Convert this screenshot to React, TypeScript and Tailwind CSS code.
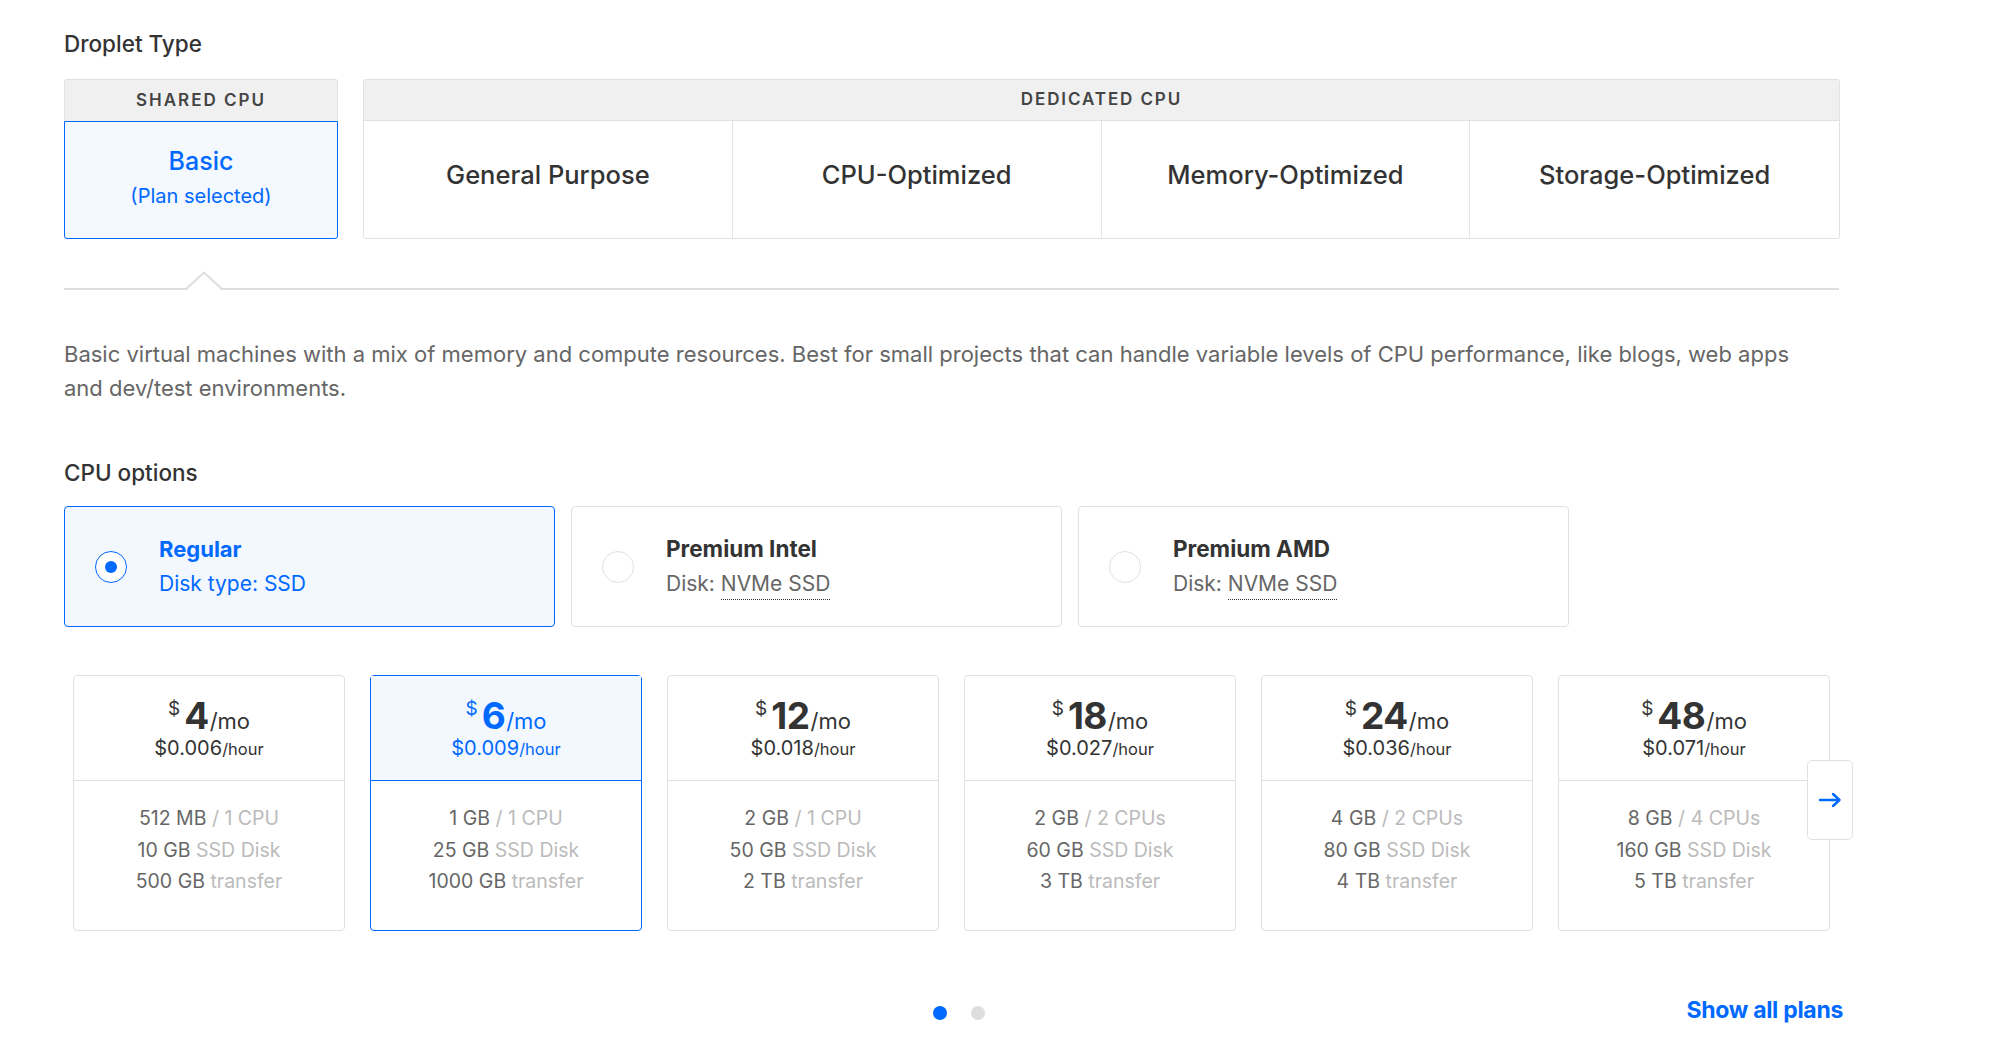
import React from "react";

const plans = [
  { mo: "4", hr: "$0.006", mem: "512 MB", cpu: "1 CPU", disk: "10 GB", tr: "500 GB" },
  { mo: "6", hr: "$0.009", mem: "1 GB", cpu: "1 CPU", disk: "25 GB", tr: "1000 GB", sel: true },
  { mo: "12", hr: "$0.018", mem: "2 GB", cpu: "1 CPU", disk: "50 GB", tr: "2 TB" },
  { mo: "18", hr: "$0.027", mem: "2 GB", cpu: "2 CPUs", disk: "60 GB", tr: "3 TB" },
  { mo: "24", hr: "$0.036", mem: "4 GB", cpu: "2 CPUs", disk: "80 GB", tr: "4 TB" },
  { mo: "48", hr: "$0.071", mem: "8 GB", cpu: "4 CPUs", disk: "160 GB", tr: "5 TB" },
];

const dedicated = ["General Purpose", "CPU-Optimized", "Memory-Optimized", "Storage-Optimized"];

export default function App() {
  return (
    <div
      className="w-[2000px] min-h-[1046px] bg-white text-[#333]"
      style={{ fontFamily: "Inter, 'Liberation Sans', sans-serif" }}
    >
      <div className="ml-[64px] w-[1776px] pt-[30px]">
        <h2 className="text-[22.5px] font-medium leading-[28px] text-[#333]">Droplet Type</h2>

        <div className="mt-[21px] flex gap-[25px]">
          <div className="w-[274px] flex flex-col">
            <div className="h-[42px] flex items-center justify-center bg-[#f0f0f0] border border-b-0 border-[#e1e1e1] rounded-t-[3px] text-[17px] font-semibold tracking-[2px] text-[#444]">
              SHARED CPU
            </div>
            <div className="h-[118px] flex flex-col items-center justify-center pb-[6px] bg-[#f4f8ff] border border-[#0069ff] rounded-b-[3px]">
              <div className="text-[25px] font-medium text-[#0069ff] leading-[30px]">Basic</div>
              <div className="text-[20px] text-[#0069ff] leading-[24px] mt-[8px]">(Plan selected)</div>
            </div>
          </div>
          <div className="flex-1 flex flex-col border border-[#e1e1e1] rounded-[3px]">
            <div className="h-[41px] flex items-center justify-center bg-[#f0f0f0] border-b border-[#e1e1e1] text-[17px] font-semibold tracking-[1.9px] text-[#444]">
              DEDICATED CPU
            </div>
            <div className="h-[117px] grid grid-cols-4">
              {dedicated.map((d, i) => (
                <div
                  key={d}
                  className={
                    "flex items-center justify-center text-[25.5px] font-medium text-[#333] pb-[8px] " +
                    (i < 3 ? "border-r border-[#e4e4e4]" : "")
                  }
                >
                  {d}
                </div>
              ))}
            </div>
          </div>
        </div>

        <div className="relative mt-[49px] h-[2px] w-[1775px] bg-[#dedede]">
          <svg className="absolute left-[120px] top-[-17px]" width="40" height="19" viewBox="0 0 40 19">
            <polygon points="3,19 20,2 37,19" fill="white" />
            <polyline points="2,18 20,1.5 38,18" fill="none" stroke="#dedede" strokeWidth="2" />
          </svg>
        </div>

        <p className="mt-[47px] text-[22px] leading-[34px] text-[#666]">
          Basic virtual machines with a mix of memory and compute resources. Best for small projects that can handle variable levels of CPU performance, like blogs, web apps
          <br />
          and dev/test environments.
        </p>

        <h2 className="mt-[54px] text-[22.5px] font-medium leading-[28px] text-[#333]">CPU options</h2>

        <div className="mt-[19px] flex gap-[16px]">
          <div className="w-[491px] h-[121px] flex items-center bg-[#f3f8ff] border border-[#0069ff] rounded-[4px]">
            <div className="ml-[30px] w-[32px] h-[32px] rounded-full border border-[#0069ff] bg-white flex items-center justify-center">
              <div className="w-[12px] h-[12px] rounded-full bg-[#0069ff]" />
            </div>
            <div className="ml-[32px] flex flex-col">
              <div className="text-[22px] font-bold text-[#0069ff] leading-[28px]">Regular</div>
              <div className="text-[21px] text-[#0069ff] leading-[28px] mt-[7px]">Disk type: SSD</div>
            </div>
          </div>
          {["Premium Intel", "Premium AMD"].map((t) => (
            <div key={t} className="w-[491px] h-[121px] flex items-center bg-white border border-[#e1e1e1] rounded-[4px]">
              <div className="ml-[30px] w-[32px] h-[32px] rounded-full border border-[#e1e1e1] bg-white" />
              <div className="ml-[32px] flex flex-col">
                <div className="text-[22.5px] font-bold text-[#333] leading-[28px]">{t}</div>
                <div className="text-[21px] text-[#666] leading-[28px] mt-[7px]">
                  Disk: <span className="border-b border-dotted border-[#333] pb-[3px]">NVMe SSD</span>
                </div>
              </div>
            </div>
          ))}
        </div>

        <div className="relative mt-[48px] ml-[9px] flex gap-[25px]">
          {plans.map((p) => (
            <div
              key={p.mo}
              className={
                "w-[272px] h-[256px] flex flex-col rounded-[4px] border " +
                (p.sel ? "border-[#0069ff]" : "border-[#e1e1e1]")
              }
            >
              <div
                className={
                  "h-[105px] flex flex-col items-center pt-[20px] border-b " +
                  (p.sel ? "bg-[#f3f8ff] border-[#0069ff] text-[#0069ff]" : "border-[#e1e1e1] text-[#333]")
                }
              >
                <div className="flex items-end leading-none">
                  <span className="text-[19px] self-start mt-[3px] mr-[4px]">$</span>
                  <span className="text-[37px] font-bold tracking-[-0.5px] leading-[40px]">{p.mo}</span>
                  <span className="text-[22px] leading-[30px] ml-[1px]">/mo</span>
                </div>
                <div className="leading-[26px] -mt-[1px]">
                  <span className="text-[20px]">{p.hr}</span>
                  <span className="text-[16.5px]">/hour</span>
                </div>
              </div>
              <div className="flex flex-col items-center pt-[22px] text-[19.5px] leading-[31.5px]">
                <div>
                  <span className="text-[#666]">{p.mem}</span>
                  <span className="text-[#bbb]"> / {p.cpu}</span>
                </div>
                <div>
                  <span className="text-[#666]">{p.disk}</span>
                  <span className="text-[#bbb]"> SSD Disk</span>
                </div>
                <div>
                  <span className="text-[#666]">{p.tr}</span>
                  <span className="text-[#bbb]"> transfer</span>
                </div>
              </div>
            </div>
          ))}
          <button className="absolute left-[1734px] top-[85px] w-[46px] h-[80px] bg-white border border-[#e1e1e1] rounded-[5px] flex items-center justify-center">
            <svg width="24" height="16" viewBox="0 0 24 16" fill="none">
              <path d="M2 8H21" stroke="#0069ff" strokeWidth="2.4" strokeLinecap="round" />
              <path d="M15 2L21.5 8L15 14" stroke="#0069ff" strokeWidth="2.4" strokeLinecap="round" strokeLinejoin="round" />
            </svg>
          </button>
        </div>

        <div className="relative mt-[65px] h-[34px] flex items-center justify-center">
          <div className="flex gap-[24px] ml-[14px]">
            <div className="w-[14px] h-[14px] rounded-full bg-[#0069ff]" />
            <div className="w-[14px] h-[14px] rounded-full bg-[#dedede]" />
          </div>
          <a className="absolute right-[-3px] top-[-3px] text-[23px] font-bold text-[#0069ff] tracking-[-0.3px]">Show all plans</a>
        </div>
      </div>
    </div>
  );
}
